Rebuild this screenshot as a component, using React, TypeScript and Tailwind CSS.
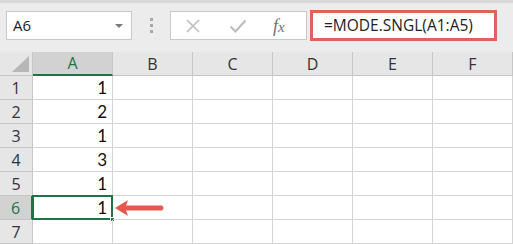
const cols = ["A", "B", "C", "D", "E", "F"];
const values: Record<number, string> = { 1: "1", 2: "2", 3: "1", 4: "3", 5: "1", 6: "1" };

export default function App() {
  return (
    <div className="w-[513px] h-[244px] overflow-hidden bg-white font-['Open_Sans',sans-serif] text-[#222]">
      {/* Formula bar */}
      <div className="h-[52px] bg-[#ececec] border-t-[3px] border-[#d9d9d9] flex items-start pt-[8px] pl-[6px]">
        <div className="w-[126px] h-[29px] bg-white border border-[#c8c8c8] flex items-center justify-between pl-[6px] pr-[8px]">
          <span className="text-[15px] leading-none">A6</span>
          <div className="w-0 h-0 border-l-[4px] border-r-[4px] border-t-[4px] border-l-transparent border-r-transparent border-t-[#7a7a7a]" />
        </div>
        <div className="w-[38px] h-[29px] flex flex-col items-center justify-center gap-[3px]">
          <div className="w-[3px] h-[3px] bg-[#a8a8a8]" />
          <div className="w-[3px] h-[3px] bg-[#a8a8a8]" />
          <div className="w-[3px] h-[3px] bg-[#a8a8a8]" />
        </div>
        <div className="w-[137px] h-[29px] bg-white border border-[#c8c8c8] flex items-center">
          <svg width="16" height="16" viewBox="0 0 16 16" className="ml-[14px]">
            <path d="M2 2 L14 14 M14 2 L2 14" stroke="#bdbdbd" strokeWidth="1.6" fill="none" />
          </svg>
          <svg width="18" height="16" viewBox="0 0 18 16" className="ml-[28px]">
            <path d="M1.5 8.5 L6.5 13.5 L16.5 2.5" stroke="#bdbdbd" strokeWidth="2.2" fill="none" />
          </svg>
          <span className="ml-[26px] text-[18px] italic text-[#6f6f6f] font-['Liberation_Serif',serif] leading-none">
            f<span className="text-[15px]">x</span>
          </span>
        </div>
        <div className="ml-[3px] -mt-[1px] w-[187px] h-[31px] bg-white border-[3px] border-[#e0625a] flex items-center pl-[11px]">
          <span className="text-[15.5px] leading-none text-[#222]">=MODE.SNGL(A1:A5)</span>
        </div>
      </div>

      {/* Grid */}
      <div className="grid grid-cols-[33px_repeat(6,80px)] grid-rows-[24px_repeat(7,24px)]">
        <div className="bg-[#e6e6e6] border-r border-b border-[#c6c6c6] relative">
          <svg width="17" height="16" viewBox="0 0 17 16" className="absolute right-[3px] bottom-[3px]">
            <path d="M17 0 L17 16 L0 16 Z" fill="#b7b7b7" />
          </svg>
        </div>
        {cols.map((c) => (
          <div
            key={c}
            className={
              c === "A"
                ? "bg-[#d2d2d2] border-r border-[#c6c6c6] border-b-[2px] border-b-[#217346] flex items-center justify-center text-[16px] text-[#217346]"
                : "bg-[#e6e6e6] border-r border-b border-[#c6c6c6] flex items-center justify-center text-[16px] text-[#333]"
            }
          >
            {c}
          </div>
        ))}
        {[1, 2, 3, 4, 5, 6, 7].map((r) => (
          <Row key={r} r={r} />
        ))}
      </div>
    </div>
  );
}

function Row({ r }: { r: number }) {
  const selected = r === 6;
  return (
    <>
      <div
        className={
          selected
            ? "bg-[#d2d2d2] border-r-[2px] border-r-[#217346] border-b border-[#c6c6c6] flex items-center justify-center text-[16px] text-[#217346]"
            : "bg-[#e6e6e6] border-r border-b border-[#c6c6c6] flex items-center justify-center text-[16px] text-[#333]"
        }
      >
        {r}
      </div>
      {cols.map((c) => (
        <div key={c} className="relative border-r border-b border-[#d4d4d4] flex items-center justify-end pr-[5px] text-[17px] text-[#111] font-['Lato',sans-serif]">
          {c === "A" ? values[r] : ""}
          {selected && c === "A" && (
            <>
              <div className="absolute -left-[1px] -top-[1px] w-[81px] h-[25px] border-[2px] border-[#217346]" />
              <div className="absolute -right-[3px] -bottom-[3px] w-[5px] h-[5px] bg-[#217346] border border-white" />
              <svg width="52" height="20" viewBox="0 0 52 20" className="absolute left-[81px] top-[2px]">
                <path d="M1 10 L14 2 L12 7.5 L48 7.5 Q51 10 48 12.5 L12 12.5 L14 18 Z" fill="#e8574f" />
              </svg>
            </>
          )}
        </div>
      ))}
    </>
  );
}
